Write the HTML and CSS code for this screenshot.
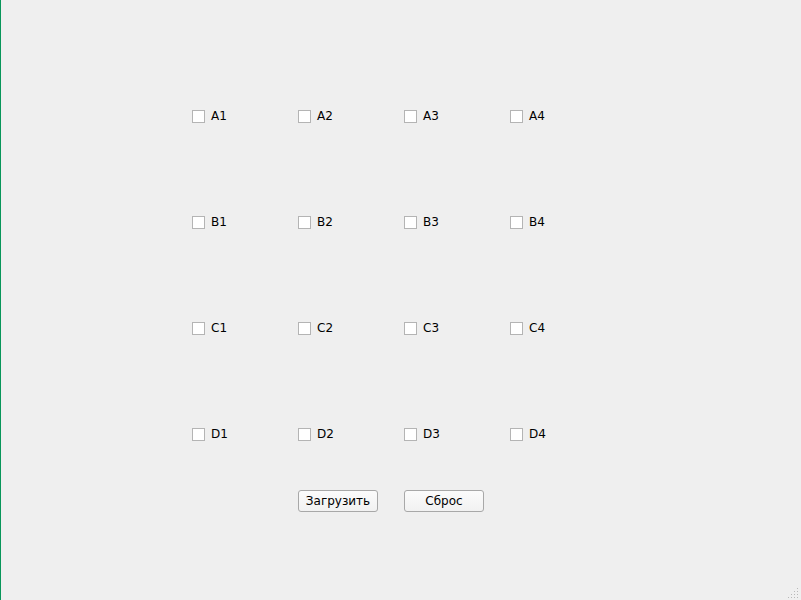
FILE: index.html
```html
<!DOCTYPE html>
<html>
<head>
<meta charset="utf-8">
<link rel="stylesheet" href="styles.css">
</head>
<body>
<div class="window">
  <div class="grid">
    <label class="cb"><span class="box"></span><span>A1</span></label>
    <label class="cb"><span class="box"></span><span>A2</span></label>
    <label class="cb"><span class="box"></span><span>A3</span></label>
    <label class="cb"><span class="box"></span><span>A4</span></label>
    <label class="cb"><span class="box"></span><span>B1</span></label>
    <label class="cb"><span class="box"></span><span>B2</span></label>
    <label class="cb"><span class="box"></span><span>B3</span></label>
    <label class="cb"><span class="box"></span><span>B4</span></label>
    <label class="cb"><span class="box"></span><span>C1</span></label>
    <label class="cb"><span class="box"></span><span>C2</span></label>
    <label class="cb"><span class="box"></span><span>C3</span></label>
    <label class="cb"><span class="box"></span><span>C4</span></label>
    <label class="cb"><span class="box"></span><span>D1</span></label>
    <label class="cb"><span class="box"></span><span>D2</span></label>
    <label class="cb"><span class="box"></span><span>D3</span></label>
    <label class="cb"><span class="box"></span><span>D4</span></label>
    <div class="cell"></div>
    <button class="btn">Загрузить</button>
    <button class="btn">Сброс</button>
    <div class="cell"></div>
  </div>
  <svg class="grip" width="12" height="12" viewBox="0 0 12 12">
    <g fill="#b8b8b8">
      <rect x="9" y="1" width="1" height="1"/>
      <rect x="6" y="4" width="1" height="1"/>
      <rect x="9" y="4" width="1" height="1"/>
      <rect x="3" y="7" width="1" height="1"/>
      <rect x="6" y="7" width="1" height="1"/>
      <rect x="9" y="7" width="1" height="1"/>
      <rect x="0" y="10" width="1" height="1"/>
      <rect x="3" y="10" width="1" height="1"/>
      <rect x="6" y="10" width="1" height="1"/>
      <rect x="9" y="10" width="1" height="1"/>
    </g>
  </svg>
</div>
</body>
</html>
```

FILE: styles.css
```css
html, body {
  margin: 0;
  padding: 0;
}
body {
  background: #efefef;
  font-family: "DejaVu Sans", sans-serif;
  font-size: 12px;
  color: #000;
}
.window {
  position: relative;
  width: 800px;
  height: 600px;
  border-left: 1px solid #08965a;
  background: #efefef;
  box-sizing: content-box;
}
.grid {
  display: grid;
  grid-template-columns: repeat(4, 106px);
  grid-template-rows: 106px 106px 106px 63px 22px;
  padding-left: 191px;
  padding-top: 109px;
}
.cb {
  display: flex;
  align-items: center;
  height: 14px;
  gap: 6px;
  line-height: 14px;
}
.box {
  width: 11px;
  height: 11px;
  border: 1px solid #b4b4b4;
  background: #fff;
  flex: none;
}
.btn {
  width: 80px;
  height: 22px;
  padding: 0;
  margin: 0;
  border: 1px solid #a8a8a8;
  border-radius: 3px;
  background: linear-gradient(#fbfbfb, #f1f1f1);
  font-family: "DejaVu Sans", sans-serif;
  font-size: 12px;
  color: #000;
}
.grip {
  position: absolute;
  right: 1px;
  bottom: 1px;
}
```
